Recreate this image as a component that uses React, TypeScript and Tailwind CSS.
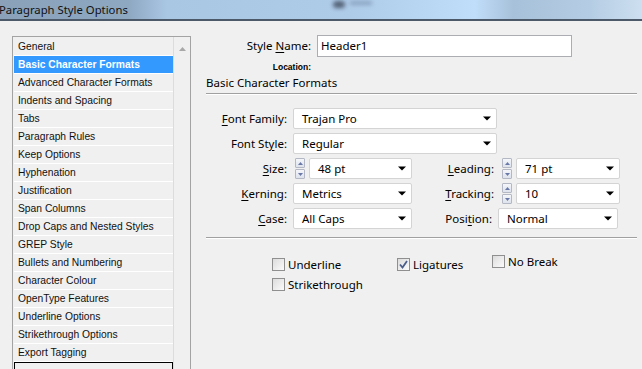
import React from "react";

const sections = [
  "General",
  "Basic Character Formats",
  "Advanced Character Formats",
  "Indents and Spacing",
  "Tabs",
  "Paragraph Rules",
  "Keep Options",
  "Hyphenation",
  "Justification",
  "Span Columns",
  "Drop Caps and Nested Styles",
  "GREP Style",
  "Bullets and Numbering",
  "Character Colour",
  "OpenType Features",
  "Underline Options",
  "Strikethrough Options",
  "Export Tagging",
];

function Arrow() {
  return (
    <svg width="8" height="5" viewBox="0 0 8 5" className="shrink-0">
      <path d="M0 0.5h8L4 4.5z" fill="#000" />
    </svg>
  );
}

function Combo({ value, width }: { value: string; width: string }) {
  return (
    <div
      className={`${width} h-[21px] flex items-center justify-between bg-white border border-[#d4d4d4] rounded-[2px] pl-[8px] pr-[5px]`}
    >
      <span>{value}</span>
      <Arrow />
    </div>
  );
}

function Spinner() {
  return (
    <div className="flex flex-col gap-[1px] w-[10px] h-[21px] mr-[4px] shrink-0">
      {[0, 1].map((i) => (
        <div
          key={i}
          className="flex-1 flex items-center justify-center border border-[#b4b8c4] bg-gradient-to-b from-[#f4f6fa] to-[#dde2ec] rounded-[1px]"
        >
          <svg width="5" height="3" viewBox="0 0 5 3">
            <path d={i === 0 ? "M0 3h5L2.5 0z" : "M0 0h5L2.5 3z"} fill="#6a78a8" />
          </svg>
        </div>
      ))}
    </div>
  );
}

function Label({ text, u, width }: { text: string; u: number; width: string }) {
  return (
    <span className={`${width} text-right pr-[6px] shrink-0`}>
      {text.slice(0, u)}
      <span className="underline underline-offset-2">{text[u]}</span>
      {text.slice(u + 1)}:
    </span>
  );
}

function Check({ label, checked }: { label: string; checked?: boolean }) {
  return (
    <div className="flex items-center gap-[3px]">
      <div className="w-[13px] h-[13px] border border-[#8f8f8f] bg-gradient-to-br from-[#dcdcdc] to-[#fbfbfb] flex items-center justify-center">
        {checked && (
          <svg width="9" height="9" viewBox="0 0 9 9">
            <path d="M1 4.5l2.5 3L8 1" stroke="#4a5e8c" strokeWidth="1.8" fill="none" />
          </svg>
        )}
      </div>
      <span>{label}</span>
    </div>
  );
}

export default function App() {
  return (
    <div className="w-[642px] h-[369px] overflow-hidden bg-[#f0f0f0] text-black font-['Liberation_Sans',sans-serif]">
      {/* Title bar */}
      <div className="relative h-[21px] border-b-2 border-[#4b5968] bg-[linear-gradient(90deg,#8aa1b9_0%,#8ea8c2_20%,#a9c6e3_26%,#aecbe8_55%,#c0ddf9_74%,#a7c1da_80%,#b5cde4_92%,#cddff0_100%)]">
        <span className="absolute left-[-1px] top-[2px] text-[11.3px] text-[#111] font-['Noto_Sans',sans-serif] leading-[16px]">
          Paragraph Style Options
        </span>
        <div className="absolute left-[333px] top-[1px] w-[12px] h-[7px] rounded-full bg-[#3c4658] blur-[2px] opacity-80" />
        <div className="absolute left-[350px] top-[1px] w-[22px] h-[4px] bg-[#6e86a4] blur-[2px] opacity-60" />
      </div>

      <div className="flex">
        {/* Section list */}
        <div className="ml-[12px] mt-[15px] w-[179px] h-[340px] flex border border-[#a3a3a3] bg-[#f0f0f0] shrink-0">
          <div className="flex-1 flex flex-col border-r border-[#dcdcdc] pl-[1px] pt-[1px] text-[10.3px] text-[#101010]">
            {sections.map((s, i) => (
              <div
                key={s}
                className={`h-[18px] leading-[17px] pl-[4px] border-b border-white ${
                  i === 1 ? "bg-[#3399ff] text-white font-bold" : ""
                }`}
              >
                {s}
              </div>
            ))}
            <div className="h-[10px] border border-black" />
          </div>
          <div className="w-[16px] flex justify-center pt-[10px]">
            <svg width="7" height="4" viewBox="0 0 7 4">
              <path d="M0 4h7L3.5 0z" fill="#a8a8a8" />
            </svg>
          </div>
        </div>

        {/* Options */}
        <div className="ml-[15px] w-[431px] text-[11.5px] font-['Noto_Sans',sans-serif]">
          <div className="flex items-center mt-[14px]">
            <Label text="Style Name" u={6} width="w-[111px]" />
            <div className="w-[255px] h-[22px] bg-white border border-[#abadb3] pl-[3px] flex items-center">
              Header1
            </div>
          </div>
          <div className="w-[105px] text-right text-[8.5px] font-bold font-['Liberation_Sans',sans-serif] mt-[5px] leading-[11px]">
            Location:
          </div>
          <div className="mt-[2px] leading-[16px]">Basic Character Formats</div>
          <div className="mt-[2px] h-[2px] border-t border-[#a0a0a0] border-b border-b-white" />

          <div className="mt-[13px] flex flex-col gap-[4px]">
            <div className="flex items-center">
              <Label text="Font Family" u={0} width="w-[87px]" />
              <Combo value="Trajan Pro" width="w-[204px]" />
            </div>
            <div className="flex items-center">
              <Label text="Font Style" u={7} width="w-[87px]" />
              <Combo value="Regular" width="w-[204px]" />
            </div>
            <div className="flex items-center">
              <Label text="Size" u={0} width="w-[87px]" />
              <div className="w-[119px] flex items-center pl-[2px]">
                <Spinner />
                <Combo value="48 pt" width="w-[103px]" />
              </div>
              <Label text="Leading" u={0} width="w-[88px]" />
              <div className="w-[120px] flex items-center pl-[2px]">
                <Spinner />
                <Combo value="71 pt" width="w-[104px]" />
              </div>
            </div>
            <div className="flex items-center">
              <Label text="Kerning" u={0} width="w-[87px]" />
              <Combo value="Metrics" width="w-[119px]" />
              <Label text="Tracking" u={0} width="w-[88px]" />
              <div className="w-[120px] flex items-center pl-[2px]">
                <Spinner />
                <Combo value="10" width="w-[104px]" />
              </div>
            </div>
            <div className="flex items-center">
              <Label text="Case" u={0} width="w-[87px]" />
              <Combo value="All Caps" width="w-[119px]" />
              <Label text="Position" u={4} width="w-[86px]" />
              <Combo value="Normal" width="w-[120px]" />
            </div>
          </div>

          <div className="mt-[8px] h-[2px] border-t border-[#a0a0a0] border-b border-b-white" />

          <div className="ml-[66px] mt-[14px] flex flex-col gap-[3px]">
            <div className="flex items-start">
              <div className="w-[125px] pt-[3px]">
                <Check label="Underline" />
              </div>
              <div className="w-[95px] pt-[3px]">
                <Check label="Ligatures" checked />
              </div>
              <Check label="No Break" />
            </div>
            <Check label="Strikethrough" />
          </div>
        </div>
      </div>
    </div>
  );
}
